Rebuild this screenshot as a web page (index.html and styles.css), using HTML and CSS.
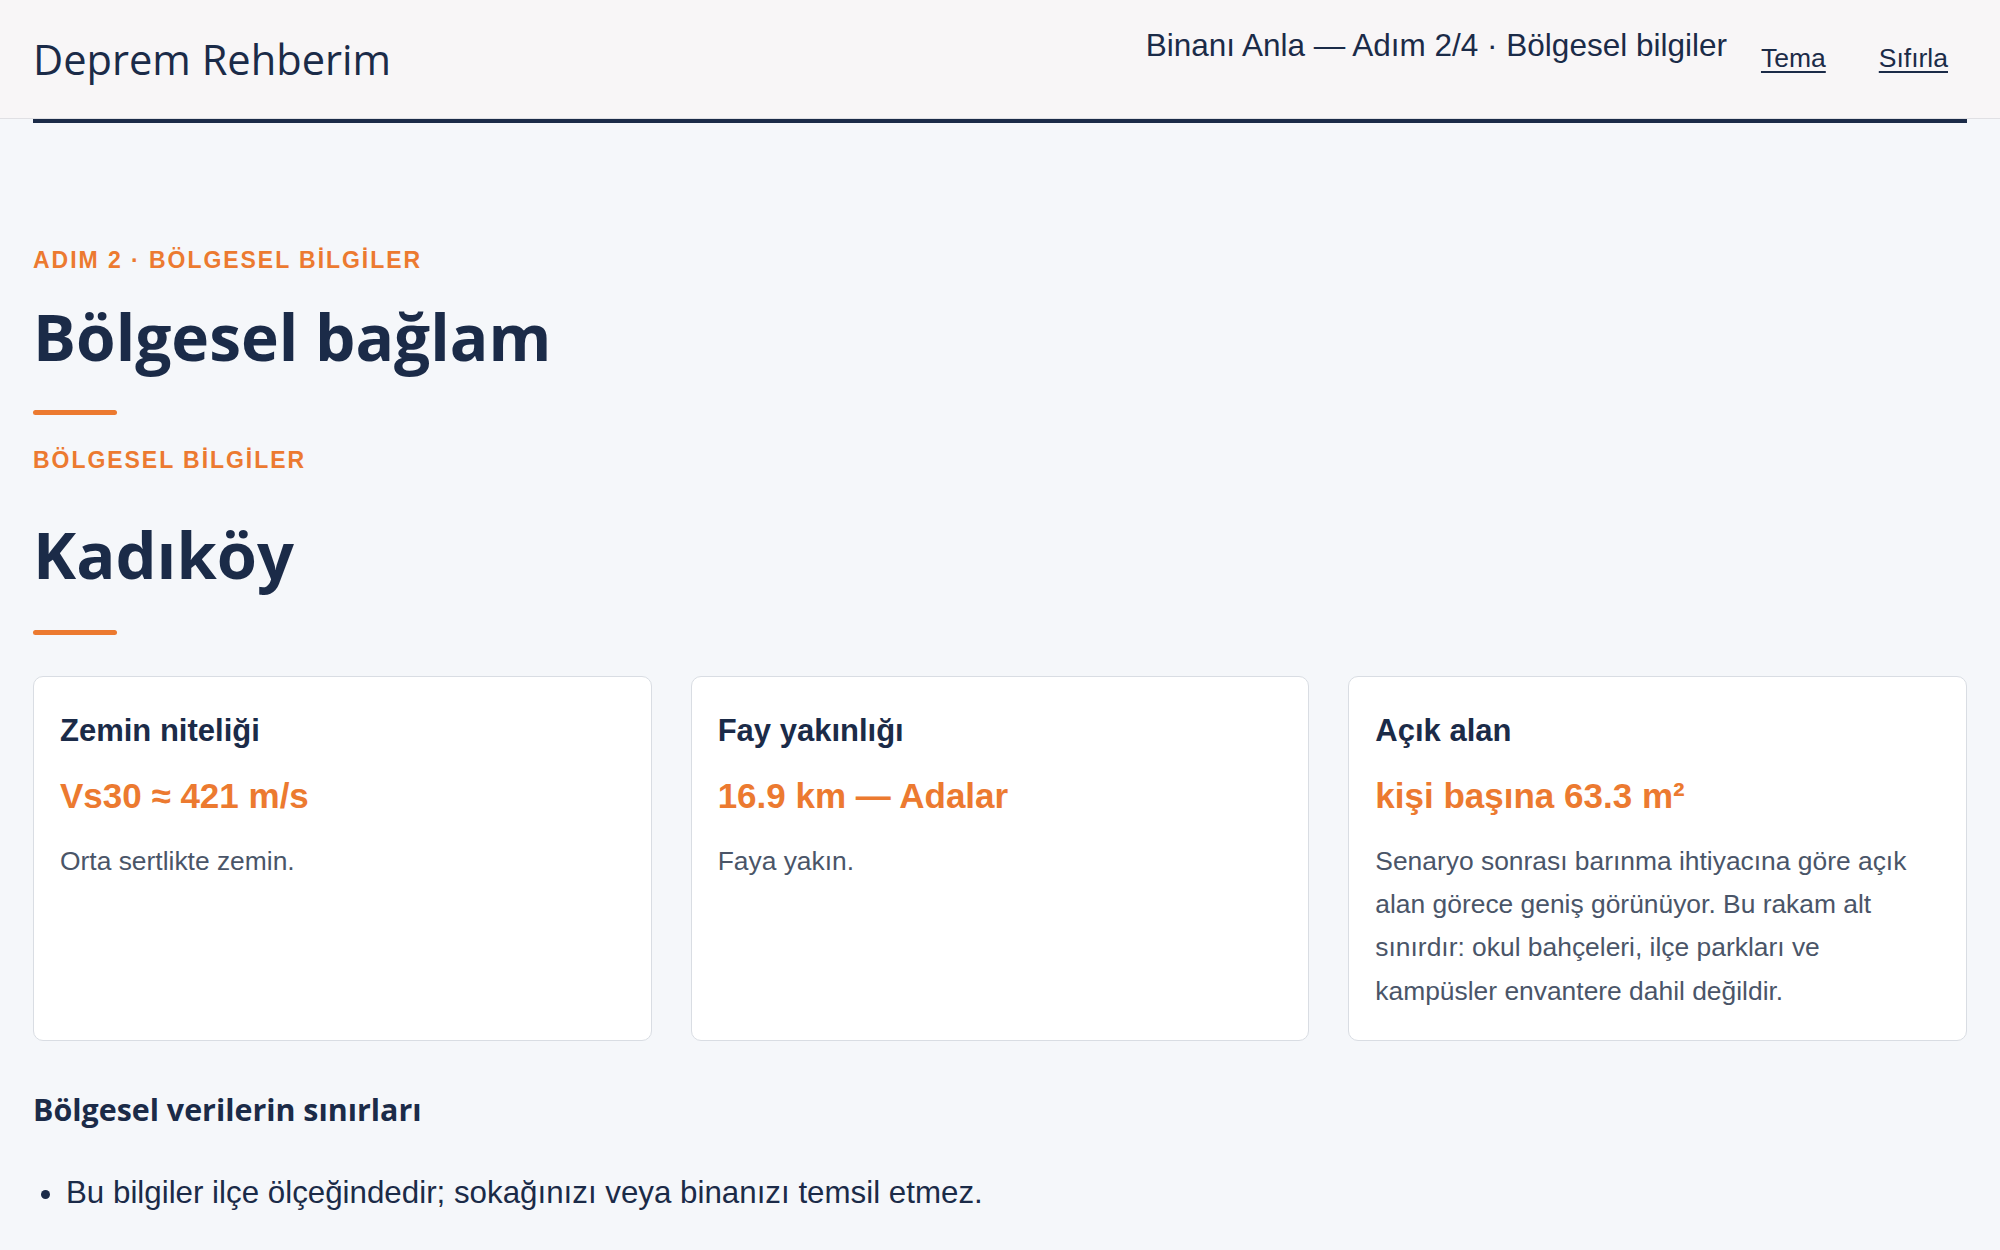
FILE: index.html
```html
<!DOCTYPE html>
<html lang="tr">
<head>
<meta charset="utf-8">
<title>Deprem Rehberim</title>
<link rel="stylesheet" href="styles.css">
</head>
<body>
<header class="topbar">
  <div class="brand">Deprem Rehberim</div>
  <div class="topnav">
    <span class="crumb">Binanı Anla — Adım 2/4 · Bölgesel bilgiler</span>
    <button class="linkbtn" type="button">Tema</button>
    <button class="linkbtn" type="button">Sıfırla</button>
  </div>
</header>
<main class="page">
  <div class="progress"></div>
  <p class="eyebrow eyebrow-top">ADIM 2 · BÖLGESEL BİLGİLER</p>
  <h1 class="title">Bölgesel bağlam</h1>
  <div class="rule rule-first"></div>
  <p class="eyebrow eyebrow-second">BÖLGESEL BİLGİLER</p>
  <h2 class="district">Kadıköy</h2>
  <div class="rule rule-second"></div>
  <section class="cards">
    <article class="card">
      <h3 class="card-title">Zemin niteliği</h3>
      <p class="card-value">Vs30 ≈ 421 m/s</p>
      <p class="card-text">Orta sertlikte zemin.</p>
    </article>
    <article class="card">
      <h3 class="card-title">Fay yakınlığı</h3>
      <p class="card-value">16.9 km — Adalar</p>
      <p class="card-text">Faya yakın.</p>
    </article>
    <article class="card">
      <h3 class="card-title">Açık alan</h3>
      <p class="card-value">kişi başına 63.3 m²</p>
      <p class="card-text">Senaryo sonrası barınma ihtiyacına göre açık alan görece geniş görünüyor. Bu rakam alt sınırdır: okul bahçeleri, ilçe parkları ve kampüsler envantere dahil değildir.</p>
    </article>
  </section>
  <h2 class="limits-title">Bölgesel verilerin sınırları</h2>
  <ul class="limits">
    <li>Bu bilgiler ilçe ölçeğindedir; sokağınızı veya binanızı temsil etmez.</li>
  </ul>
</main>
</body>
</html>
```

FILE: styles.css
```css
* { box-sizing: border-box; }

html, body {
  margin: 0;
  padding: 0;
  background: #f5f7fa;
  color: #1b2b48;
  font-family: "Liberation Sans", Arial, sans-serif;
}

.topbar {
  height: 119px;
  background: #f8f6f7;
  border-bottom: 1px solid #e0e0e4;
  display: flex;
  justify-content: space-between;
  align-items: flex-start;
  padding: 29px 33px 0 33px;
}

.brand {
  font-family: "Open Sans", sans-serif;
  font-size: 41.6px;
  line-height: normal;
  color: #1b2b48;
  font-weight: 400;
  margin-top: 2px;
}

.topnav {
  display: flex;
  align-items: flex-start;
  gap: 15px;
}

.crumb {
  font-size: 31.5px;
  line-height: normal;
  color: #1b2b48;
  margin-top: -2px;
}

.linkbtn {
  background: none;
  border: none;
  font-family: "Liberation Sans", Arial, sans-serif;
  font-size: 26.5px;
  line-height: normal;
  color: #1b2b48;
  text-decoration: underline;
  text-underline-offset: 4px;
  padding: 8px 19px;
  margin-top: 6px;
  cursor: pointer;
}

.page {
  padding: 0 33px 40px 33px;
}

.progress {
  height: 4px;
  background: #1b2b48;
}

.eyebrow {
  margin: 0;
  color: #ec7a30;
  font-weight: 700;
  font-size: 23px;
  letter-spacing: 0.085em;
  line-height: normal;
}

.eyebrow-top { margin-top: 124px; }

.title {
  margin: 25px 0 0 0;
  font-family: "Open Sans", sans-serif;
  font-weight: 700;
  font-size: 64px;
  line-height: 1.2;
  color: #1b2b48;
}

.rule {
  width: 84px;
  height: 5px;
  border-radius: 3px;
  background: #ec7a30;
}

.rule-first { margin-top: 34px; }
.rule-second { margin-top: 37px; }

.eyebrow-second { margin-top: 32px; }

.district {
  margin: 41px 0 0 0;
  font-family: "Open Sans", sans-serif;
  font-weight: 700;
  font-size: 65px;
  line-height: 1.2;
  color: #1b2b48;
}

.cards {
  margin-top: 41px;
  display: grid;
  grid-template-columns: repeat(3, 1fr);
  gap: 39px;
}

.card {
  background: #ffffff;
  border: 1.5px solid #d9dde3;
  border-radius: 10px;
  padding: 36px 26px 27px 26px;
}

.card-title {
  margin: 0;
  font-size: 31px;
  font-weight: 700;
  line-height: normal;
  color: #1b2b48;
}

.card-value {
  margin: 27px 0 0 0;
  font-size: 35px;
  font-weight: 700;
  line-height: normal;
  color: #ec7a30;
}

.card-text {
  margin: 24px 0 0 0;
  font-size: 26.4px;
  line-height: 43.3px;
  color: #4a5568;
}

.limits-title {
  margin: 49px 0 0 0;
  font-family: "Open Sans", sans-serif;
  font-weight: 700;
  font-size: 30.4px;
  line-height: 1.3;
  color: #1b2b48;
}

.limits {
  margin: 40px 0 0 0;
  padding-left: 33px;
  font-size: 31.3px;
  line-height: 1.5;
  color: #1b2b48;
}
```
